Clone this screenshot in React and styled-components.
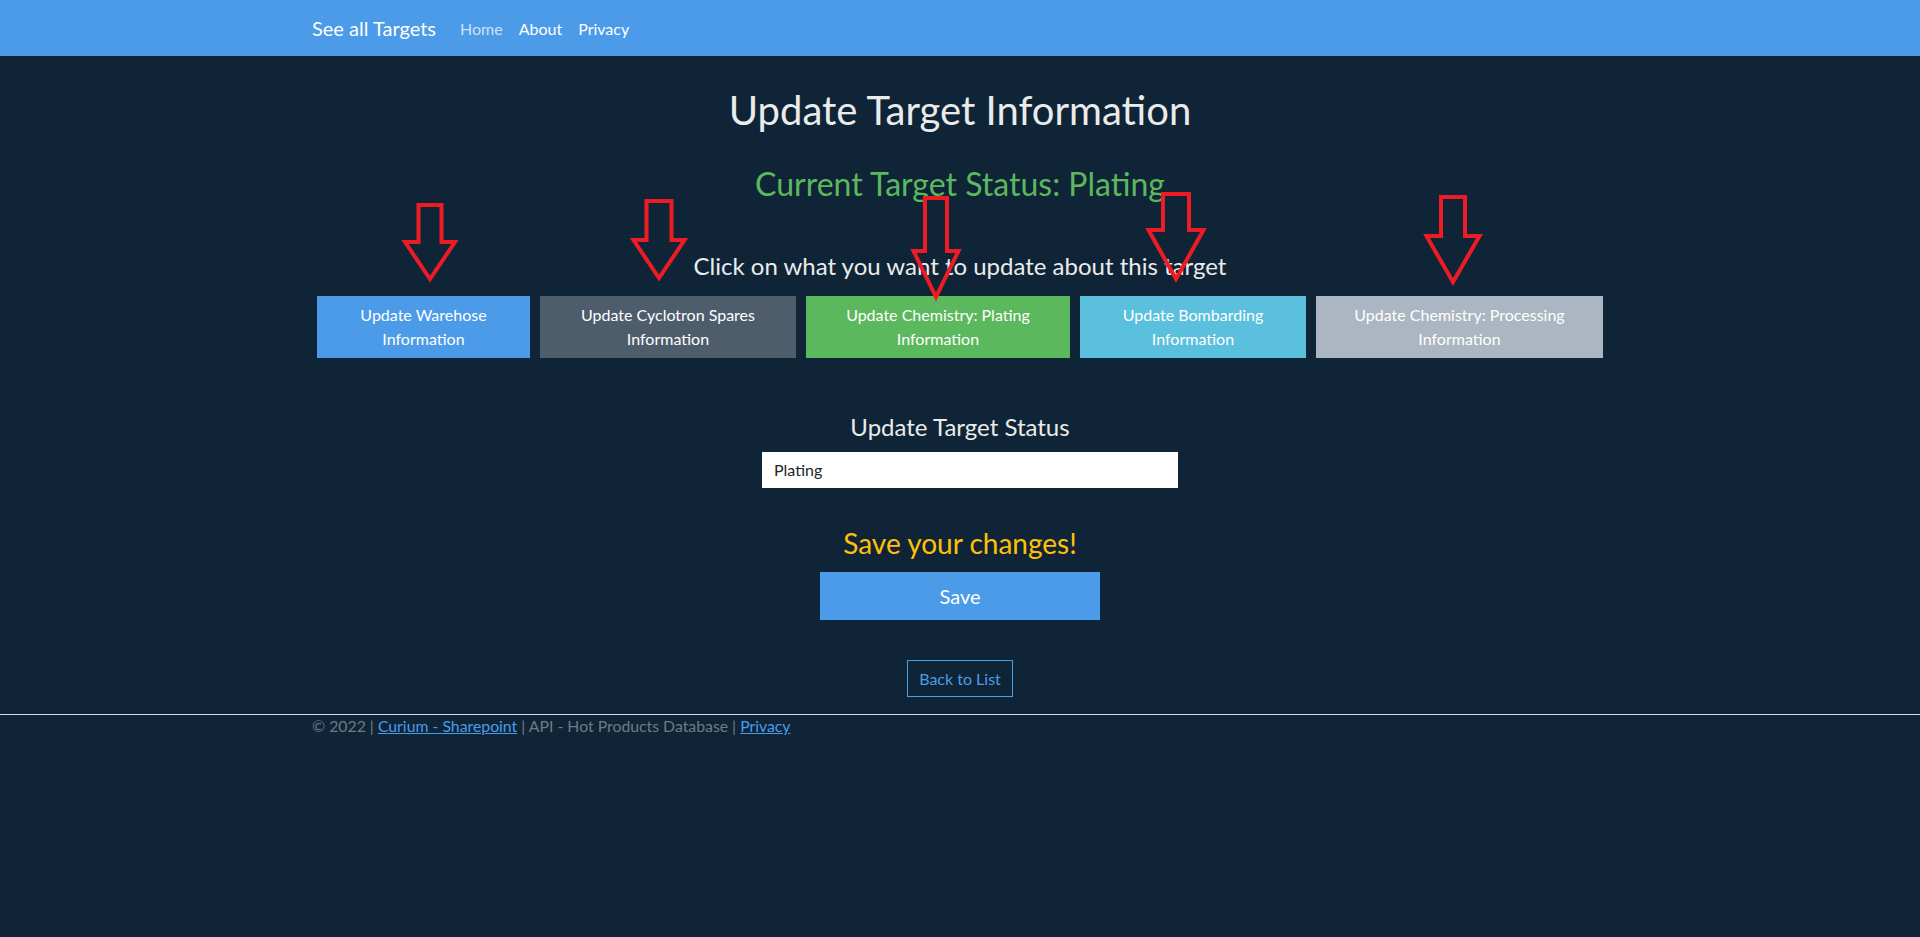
import styled, { createGlobalStyle } from 'styled-components';

const GlobalStyle = createGlobalStyle`
  html, body {
    margin: 0;
    background: #0f2537;
    color: #ebebeb;
    font-family: Lato, "Open Sans", sans-serif;
  }
  * {
    box-sizing: border-box;
  }
`;

const Page = styled.div`
  position: relative;
  min-height: 937px;
`;

const Navbar = styled.nav`
  height: 56px;
  background: #4c9be8;
`;

const NavInner = styled.div`
  width: 1296px;
  height: 100%;
  margin: 0 auto;
  display: flex;
  align-items: center;
`;

const Brand = styled.a`
  font-size: 20px;
  color: #fff;
  margin-right: 16px;
  text-decoration: none;
`;

const NavLink = styled.a`
  font-size: 16px;
  padding: 0 8px;
  color: ${(p) => (p.$dim ? 'rgba(255, 255, 255, 0.72)' : '#fff')};
  text-decoration: none;
`;

const Main = styled.main`
  width: 1296px;
  margin: 0 auto;
  display: flex;
  flex-direction: column;
  align-items: center;
  text-align: center;
`;

const Title = styled.h1`
  font-size: 40px;
  font-weight: 400;
  line-height: 1.2;
  margin: 30px 0 0;
`;

const Status = styled.h2`
  font-size: 32px;
  font-weight: 400;
  line-height: 1.2;
  color: #5cb85c;
  margin: 31px 0 0;
`;

const Heading = styled.h4`
  font-size: 24px;
  font-weight: 400;
  line-height: 1.2;
  margin: ${(p) => p.$mt}px 0 0;
`;

const ButtonRow = styled.div`
  display: flex;
  justify-content: center;
  gap: 10px;
  margin-top: 15px;
`;

const UpdateButton = styled.button`
  width: ${(p) => p.$w}px;
  height: 62px;
  border: none;
  border-radius: 0;
  padding: 7px 12px;
  background: ${(p) => p.$bg};
  color: #fff;
  font-family: inherit;
  font-size: 16px;
  line-height: 24px;
  cursor: pointer;
`;

const StatusInput = styled.input`
  width: 416px;
  height: 36px;
  margin: 10px 0 0 20px;
  padding: 0 12px;
  border: none;
  border-radius: 0;
  background: #fff;
  color: #212529;
  font-family: inherit;
  font-size: 16px;
`;

const SaveTitle = styled.h3`
  font-size: 28px;
  font-weight: 400;
  line-height: 1.2;
  color: #ffc107;
  margin: 39px 0 0;
`;

const SaveButton = styled.button`
  width: 280px;
  height: 48px;
  margin-top: 11px;
  border: none;
  border-radius: 0;
  background: #4c9be8;
  color: #fff;
  font-family: inherit;
  font-size: 20px;
  cursor: pointer;
`;

const BackLink = styled.a`
  display: inline-block;
  margin-top: 40px;
  padding: 6px 11px;
  border: 1px solid #4c9be8;
  color: #4c9be8;
  font-size: 16px;
  line-height: 23px;
  text-decoration: none;
`;

const Footer = styled.footer`
  margin-top: 17px;
  border-top: 1px solid #d5dbe1;
`;

const FooterInner = styled.div`
  width: 1296px;
  margin: 0 auto;
  font-size: 15.8px;
  line-height: 22px;
  color: #6f7a85;
`;

const FooterLink = styled.a`
  color: #4c9be8;
  text-decoration: underline;
`;

const Overlay = styled.svg`
  position: absolute;
  left: 0;
  top: 0;
  width: 1920px;
  height: 937px;
  pointer-events: none;
  overflow: visible;
`;

const arrows = [
  { cx: 430, top: 203, shaft: 27, head: 54, shoulder: 242, tip: 282 },
  { cx: 659, top: 199, shaft: 29, head: 55, shoulder: 240, tip: 281 },
  { cx: 936, top: 196, shaft: 26, head: 49, shoulder: 251, tip: 300 },
  { cx: 1176, top: 192, shaft: 30, head: 59, shoulder: 230, tip: 282 },
  { cx: 1453, top: 195, shaft: 28, head: 57, shoulder: 236, tip: 285 },
];

const arrowPoints = ({ cx, top, shaft, head, shoulder, tip }) => {
  const s = shaft / 2 - 2;
  const h = head / 2 - 2;
  const t = top + 2;
  const b = tip - 3;
  return [
    [cx - s, t],
    [cx + s, t],
    [cx + s, shoulder],
    [cx + h, shoulder],
    [cx, b],
    [cx - h, shoulder],
    [cx - s, shoulder],
  ]
    .map((p) => p.join(','))
    .join(' ');
};

const buttons = [
  { w: 213, bg: '#4c9be8', l1: 'Update Warehose', l2: 'Information' },
  { w: 256, bg: '#4e5d6c', l1: 'Update Cyclotron Spares', l2: 'Information' },
  { w: 264, bg: '#5cb85c', l1: 'Update Chemistry: Plating', l2: 'Information' },
  { w: 226, bg: '#5bc0de', l1: 'Update Bombarding', l2: 'Information' },
  { w: 287, bg: '#abb6c2', l1: 'Update Chemistry: Processing', l2: 'Information' },
];

const App = () => {
  return (
    <Page>
      <GlobalStyle />
      <Navbar>
        <NavInner>
          <Brand href='#'>See all Targets</Brand>
          <NavLink href='#' $dim>
            Home
          </NavLink>
          <NavLink href='#'>About</NavLink>
          <NavLink href='#'>Privacy</NavLink>
        </NavInner>
      </Navbar>

      <Main>
        <Title>Update Target Information</Title>
        <Status>Current Target Status: Plating</Status>
        <Heading $mt={49}>Click on what you want to update about this target</Heading>
        <ButtonRow>
          {buttons.map((b) => (
            <UpdateButton key={b.l1} $w={b.w} $bg={b.bg}>
              {b.l1}
              <br />
              {b.l2}
            </UpdateButton>
          ))}
        </ButtonRow>

        <Heading $mt={55}>Update Target Status</Heading>
        <StatusInput defaultValue='Plating' />

        <SaveTitle>Save your changes!</SaveTitle>
        <SaveButton>Save</SaveButton>

        <BackLink href='#'>Back to List</BackLink>
      </Main>

      <Footer>
        <FooterInner>
          &copy; 2022 | <FooterLink href='#'>Curium - Sharepoint</FooterLink> | API - Hot Products
          Database | <FooterLink href='#'>Privacy</FooterLink>
        </FooterInner>
      </Footer>

      <Overlay viewBox='0 0 1920 937'>
        {arrows.map((a) => (
          <polygon
            key={a.cx}
            points={arrowPoints(a)}
            fill='none'
            stroke='#ed1c24'
            strokeWidth='4'
            strokeLinejoin='miter'
          />
        ))}
      </Overlay>
    </Page>
  );
};

export default App;
